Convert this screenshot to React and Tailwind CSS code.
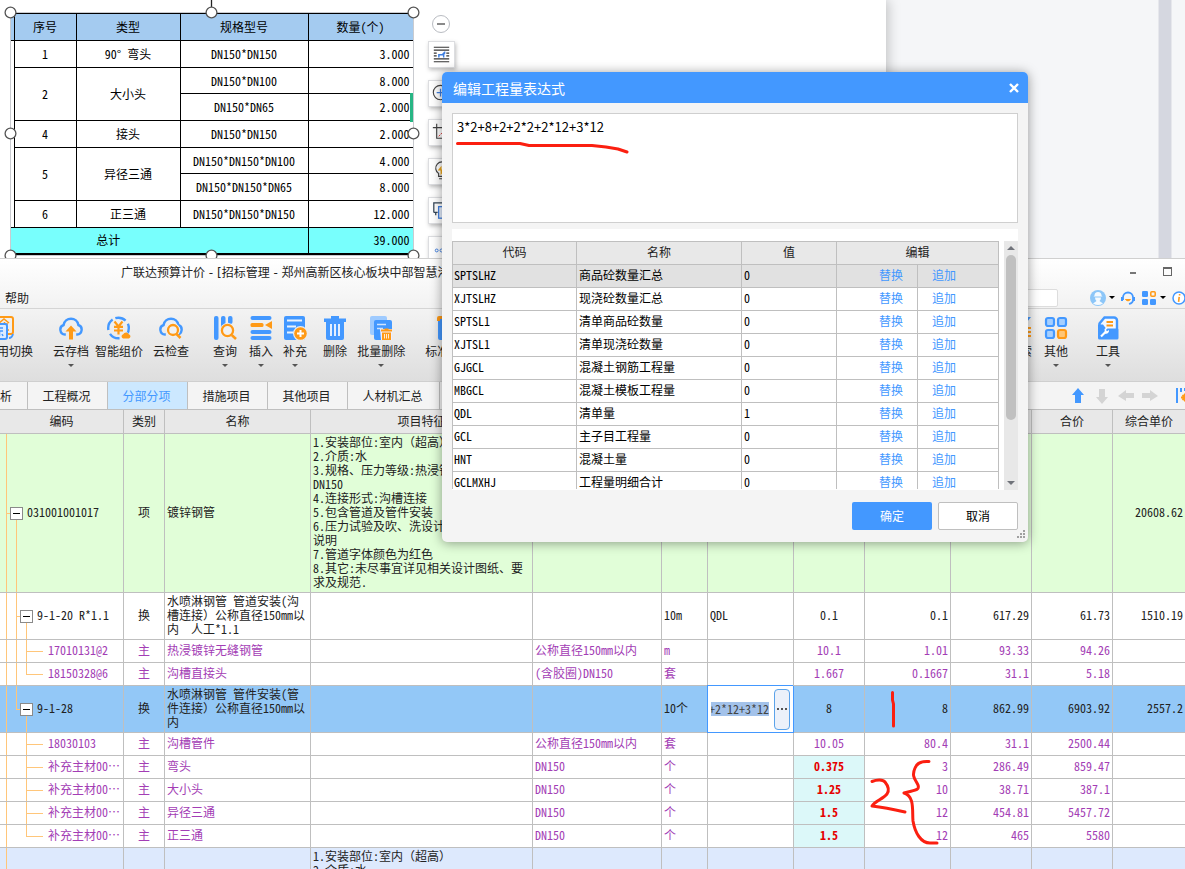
import React from "react";

const BLUE = "#4398ff";
const ORANGE = "#ff9a16";

/* ---------- Document area ---------- */

const cell = "border border-black py-0";

function QuantityTable() {
  return (
    <table className="w-[402px] table-fixed border-collapse border-b-2 border-black text-center font-[family-name:'Noto_Sans_Mono_CJK_SC','Noto_Sans_CJK_SC',monospace] text-xs leading-4 text-black">
      <colgroup>
        <col className="w-[3px]" />
        <col className="w-[62px]" />
        <col className="w-[104px]" />
        <col className="w-[128px]" />
        <col className="w-[105px]" />
      </colgroup>
      <thead className="bg-[#a4cbf0]">
        <tr className="h-[27px]">
          <td className="border-y border-black p-0" />
          <th className={`${cell} font-normal`}>序号</th>
          <th className={`${cell} font-normal`}>类型</th>
          <th className={`${cell} font-normal`}>规格型号</th>
          <th className={`${cell} font-normal`}>数量(个)</th>
        </tr>
      </thead>
      <tbody className="bg-white">
        <tr className="h-[27px]">
          <td rowSpan={7} className="p-0" />
          <td className={cell}>1</td>
          <td className={cell}>90° 弯头</td>
          <td className={cell}>DN150*DN150</td>
          <td className={`${cell} pr-[3px] text-right`}>3.000</td>
        </tr>
        <tr className="h-[26px]">
          <td rowSpan={2} className={cell}>2</td>
          <td rowSpan={2} className={cell}>大小头</td>
          <td className={cell}>DN150*DN100</td>
          <td className={`${cell} pr-[3px] text-right`}>8.000</td>
        </tr>
        <tr className="h-[27px]">
          <td className={cell}>DN150*DN65</td>
          <td className={`${cell} pr-[3px] text-right`}>2.000</td>
        </tr>
        <tr className="h-[27px]">
          <td className={cell}>4</td>
          <td className={cell}>接头</td>
          <td className={cell}>DN150*DN150</td>
          <td className={`${cell} pr-[3px] text-right`}>2.000</td>
        </tr>
        <tr className="h-[26px]">
          <td rowSpan={2} className={cell}>5</td>
          <td rowSpan={2} className={cell}>异径三通</td>
          <td className={cell}>DN150*DN150*DN100</td>
          <td className={`${cell} pr-[3px] text-right`}>4.000</td>
        </tr>
        <tr className="h-[27px]">
          <td className={cell}>DN150*DN150*DN65</td>
          <td className={`${cell} pr-[3px] text-right`}>8.000</td>
        </tr>
        <tr className="h-[27px]">
          <td className={cell}>6</td>
          <td className={cell}>正三通</td>
          <td className={cell}>DN150*DN150*DN150</td>
          <td className={`${cell} pr-[3px] text-right`}>12.000</td>
        </tr>
        <tr className="h-[26px] bg-[#78fffd]">
          <td colSpan={4} className="border-y border-black py-0 pr-[102px]">总计</td>
          <td className={`${cell} pr-[3px] text-right`}>39.000</td>
        </tr>
      </tbody>
    </table>
  );
}

function SelectionFrame() {
  const points = [[10, 12], [211, 12], [413, 12], [10, 133], [413, 133], [10, 255], [211, 255], [413, 255]];
  return (
    <svg className="pointer-events-none absolute left-0 top-0" width="424" height="258" aria-hidden="true">
      <path d="M10.5 12.5H413.5V255.5H10.5Z" fill="none" stroke="#c9cbd0" />
      <path d="M211.5 0V7" stroke="#222" strokeWidth="1.3" />
      <rect x="410" y="93" width="3" height="29" fill="#27b584" />
      {points.map(([x, y]) => (
        <circle key={`${x}-${y}`} cx={x + 0.5} cy={y + 0.5} r="5.4" fill="#fff" stroke="#555" strokeWidth="1.3" />
      ))}
    </svg>
  );
}

const sideIcons = [
  { label: "布局选项", art: <><path d="M5 5.500h16M5 8.500h16M5 17.500h16M5 20.500h16M5 11.500h3M5 14.500h3M18 11.500h3M18 14.500h3" stroke="#333" strokeWidth="1.200" /><path d="M9.500 16v-3.500h4l2.500-2.500h1v2l-1 1v3h-1.500v-2H11V16z" fill="#3f7fe0" /></> },
  { label: "放大", art: <><circle cx="12" cy="12" r="7.500" fill="none" stroke="#444" strokeWidth="1.200" /><path d="M8 12h8M12 8v8" stroke="#3f7fe0" strokeWidth="1.300" /></> },
  { label: "裁剪", art: <><path d="M4 8h16v14M8 4v15h16" fill="none" stroke="#444" strokeWidth="1.200" /><path d="M10 17l8-8" stroke="#d33" strokeDasharray="2 1" /></> },
  { label: "智能", art: <><path d="M10 18v-3a6.500 6.500 0 1 1 7 0v3zM10.500 20.500h6" fill="none" stroke="#444" strokeWidth="1.200" /><path d="M13 7l-4 5h3v5l5-6h-4z" fill="#f0a91c" /></> },
  { label: "转换", art: <><path d="M5 15V5h16M5 15h4M7 15v3" fill="none" stroke="#345" strokeWidth="1.300" /><rect x="10" y="9" width="12" height="12" fill="#e8f1ff" stroke="#3f7fe0" strokeWidth="1.300" /><path d="M14 12v6h4" fill="none" stroke="#3f7fe0" /></> },
  { label: "更多", art: <><circle cx="8" cy="14" r="1.500" fill="none" stroke="#3f7fe0" /><circle cx="13" cy="14" r="1.500" fill="none" stroke="#3f7fe0" /></> },
];

function DocumentArea() {
  return (
    <section className="flex h-[258px] shrink-0 overflow-hidden bg-[#f5f6f8]">
      <div className="relative z-10 flex w-[886px] shrink-0 bg-white shadow-[2px_0_12px_rgba(0,0,0,0.22)]">
        <div className="w-[424px] pl-[11px] pt-[13px]">
          <QuantityTable />
        </div>
        <SelectionFrame />
        <div className="flex w-[34px] flex-col items-center gap-3 pt-[15px]">
          <button aria-label="收起" className="-mb-1 flex size-[18px] shrink-0 items-center justify-center rounded-full border border-[#b9bcc2] bg-white">
            <span className="h-0.5 w-2 bg-[#8a8a8a]" />
          </button>
          {sideIcons.map((icon) => (
            <button key={icon.label} aria-label={icon.label} className="size-[27px] shrink-0 border border-[#dcdde0] bg-white shadow-[1px_2px_4px_rgba(0,0,0,0.25)]">
              <svg width="25" height="25" viewBox="0 0 26 26">{icon.art}</svg>
            </button>
          ))}
        </div>
      </div>
      <div className="flex-1" />
      <div className="w-3.5 border-x border-[#e6e7ec] bg-[#d5d7e0]" />
      <div className="w-[13px] bg-[#f5f6f8]" />
    </section>
  );
}

/* ---------- Toolbar icons ---------- */

const Cloud = () => (
  <path d="M6.800 18.500H6A4.900 4.900 0 0 1 4.600 9 7.500 7.500 0 0 1 19.400 9 4.900 4.900 0 0 1 18 18.500h-.8" fill="none" stroke={BLUE} strokeWidth="2.400" />
);

const art = {
  swap: <><rect x="2" y="1" width="20" height="17" rx="2" fill="none" stroke={ORANGE} strokeWidth="2" /><path d="M8 7l5-4 5 4M10 8h7M13.500 6v8M9 14h9" fill="none" stroke={ORANGE} strokeWidth="1.600" /><rect x="1" y="8" width="15" height="15" rx="2" fill="#dcecff" stroke={BLUE} strokeWidth="2" /><path d="M4 12h8M5 15h7M8.500 15v5M5 20l1-2M12 20l-1-2" stroke={BLUE} strokeWidth="1.500" /><path d="M18 22q3 0 4-4" fill="none" stroke={BLUE} strokeWidth="1.800" /></>,
  cloudUp: <><Cloud /><path d="M12 9.500l5.500 6H14v8h-4v-8H6.500z" fill={ORANGE} /></>,
  price: <><circle cx="11.500" cy="12" r="10.300" fill="none" stroke={BLUE} strokeWidth="2.400" strokeDasharray="12 3 11 4" /><path d="M7.500 5.500l4 5 4-5M7 10.800h9M7 14.500h9M11.500 10v8.500" fill="none" stroke={ORANGE} strokeWidth="2.200" /><path d="M14 23.500h9.500l-3.200-6h-3z" fill="#efefef" stroke="#efefef" strokeWidth="2" /><path d="M16 22.500a2.200 2.200 0 0 1 .2-4.200 3 3 0 0 1 5.600 0 2.200 2.200 0 0 1 .2 4.200z" fill={ORANGE} /></>,
  cloudSearch: <><Cloud /><circle cx="14" cy="14" r="7" fill="#f1f1f1" /><circle cx="14" cy="14" r="5" fill="#f1f1f1" stroke={ORANGE} strokeWidth="2.300" /><path d="M17.500 18l4 4" stroke={ORANGE} strokeWidth="2.500" /></>,
  query: <><rect x="1" y="0" width="4.500" height="24" rx="2" fill={BLUE} /><rect x="8" y="0" width="4.500" height="13" rx="2" fill={BLUE} /><rect x="15" y="0" width="4.500" height="8" rx="2" fill={BLUE} /><circle cx="14.500" cy="14.500" r="7.500" fill="#f1f1f1" /><circle cx="14.500" cy="14.500" r="5.600" fill="#f1f1f1" stroke={ORANGE} strokeWidth="2.300" /><path d="M18.700 19l4.300 4" stroke={ORANGE} strokeWidth="2.500" /></>,
  insert: <><g fill={BLUE}><rect x="1.500" y="0" width="21" height="4" rx="2" /><rect x="1.500" y="14" width="21" height="4" rx="2" /><rect x="1.500" y="20" width="21" height="4" rx="2" /></g><rect x="1.500" y="7" width="13" height="4" rx="1.500" fill={ORANGE} /><path d="M23 5v8l-7-4z" fill={ORANGE} /></>,
  supplement: <><path d="M3 0h17a2 2 0 0 1 2 2v22H3a2 2 0 0 1-2-2V2a2 2 0 0 1 2-2z" fill={BLUE} /><path d="M4 4.500h15M4 10.500h9M4 16.500h6" stroke="#e9f3ff" strokeWidth="1.800" /><circle cx="17.500" cy="17.500" r="7.500" fill="#eee" /><circle cx="17.500" cy="17.500" r="6.300" fill={ORANGE} /><path d="M14 17.500h7M17.500 14v7" stroke="#fff" strokeWidth="2" /></>,
  trash: <><path d="M1 2.500h7V0h8v2.500h7V6H1z" fill={BLUE} /><path d="M3 5h18v17a2 2 0 0 1-2 2H5a2 2 0 0 1-2-2z" fill={BLUE} /><path d="M8 8v12M12 8v12M16 8v12" stroke="#e9f3ff" strokeWidth="1.900" /></>,
  batch: <><rect x="1" y="0" width="17" height="19" rx="2" fill="#9fcbff" /><rect x="5" y="4" width="18" height="20" rx="2" fill={BLUE} /><path d="M8 8.500h9M8 12.500h6" stroke="#cfe4ff" strokeWidth="1.700" /><path d="M11 13h12v11H12z" fill="#eef" /><path d="M12 14.500h11M15.500 13.500h4" stroke={ORANGE} strokeWidth="1.800" /><path d="M13 16.500h9V24h-9z" fill={ORANGE} /><path d="M15.500 18v4.500M17.500 18v4.500M19.500 18v4.500" stroke="#fff" strokeWidth=".8" /></>,
  standard: <><rect x="1" y="1" width="20" height="23" rx="2" fill={BLUE} /><path d="M0 5V2a2 2 0 0 1 2-2h8v3H3v2z" fill={ORANGE} /><path d="M5 8h14M5 13h14M5 18h14" stroke="#fff" strokeWidth="1.600" /></>,
  filter: <><path d="M1 1h22l-8 10v12l-5-3v-9z" fill={BLUE} /><path d="M14 12h9M14 16h9M14 20h9" stroke={ORANGE} strokeWidth="2" /></>,
  other: <><g fill="#a5cfff" stroke={BLUE} strokeWidth="2.200"><rect x="2" y="2" width="8" height="8" rx="2" /><rect x="14" y="2" width="8" height="8" rx="2" /><rect x="2" y="14" width="8" height="8" rx="2" /></g><rect x="14" y="14" width="8" height="8" rx="2" fill="#ffc676" stroke={ORANGE} strokeWidth="2.200" /></>,
  tools: <><path d="M3.500 12V7.500l5-6H18a3 3 0 0 1 3 3V14" fill="#f4f8ff" stroke={BLUE} strokeWidth="2.400" /><path d="M10.500 6h6.500M10.500 9.500h6.500" stroke={ORANGE} strokeWidth="2" /><path d="M2 8.500h5l3 4h11a1.500 1.500 0 0 1 1.500 1.500v8a1.500 1.500 0 0 1-1.500 1.500H3.500A1.500 1.500 0 0 1 2 22z" fill={BLUE} /><path d="M5 20.500l5-5" stroke="#fff" strokeWidth="2.200" /><path d="M8.500 13a3 3 0 0 1 3-1l-1.500 2 1 1.200 2-1.200a3 3 0 0 1-4 3.500z" fill="#fff" /></>,
};

function ToolButton({ icon, label, caret, className = "" }) {
  return (
    <button className={`flex shrink-0 flex-col items-center ${className}`}>
      <svg width="24" height="24" viewBox="0 0 24 24">{art[icon]}</svg>
      <span className="mt-0.5 whitespace-nowrap text-xs leading-[18px]">{label}</span>
      {caret && <span className="mt-1 border-x-[3px] border-t-[3px] border-x-transparent border-t-[#555]" />}
    </button>
  );
}

function TitleBar() {
  return (
    <header className="flex h-[50px] shrink-0 flex-col border-b border-[#d5d5d5] bg-linear-to-b from-white to-[#f2f2f2]">
      <div className="flex h-7 items-center pl-[121px] pr-3">
        <h1 className="flex-1 whitespace-nowrap font-[family-name:'DejaVu_Sans','Noto_Sans_CJK_SC',sans-serif] text-xs">广联达预算计价 - [招标管理 - 郑州高新区核心板块中部智慧港]</h1>
        <button aria-label="最小化" className="mr-[27px] h-0.5 w-1.5 bg-[#777]" />
        <button aria-label="还原" className="mr-px -mt-1 size-[9px] border border-t-2 border-[#666]" />
      </div>
      <div className="flex flex-1 items-center pl-[5px]">
        <a href="#help" className="text-xs">帮助</a>
        <input aria-label="搜索" className="ml-auto h-[18px] w-[180px] rounded-xs border border-[#ddd] bg-white" />
        <div className="ml-8 flex w-[95px] shrink-0 items-center">
          <button aria-label="用户">
            <svg width="16" height="16" viewBox="0 0 16 16"><circle cx="8" cy="8" r="8" fill="#8cc6f8" /><path d="M4.500 5.500a3.500 3.500 0 0 1 7 0l1 1h-9zM5 7.500h6q0 2-1.500 3.500l3.500 2.500q-5 3-10 0L6.500 11Q5 9.500 5 7.500z" fill="#fff" opacity=".9" /></svg>
          </button>
          <span className="ml-[3px] border-x-[3px] border-t-[3px] border-x-transparent border-t-black" />
          <button aria-label="客服" className="ml-1.5">
            <svg width="14" height="14" viewBox="0 0 14 14"><path d="M2 9V6.500a5 5 0 0 1 10 0V9q0 3-4 4" fill="none" stroke={BLUE} strokeWidth="1.800" /><path d="M1 6v4M13 6v4" stroke={BLUE} strokeWidth="2" /><path d="M4.500 8.500q2.500 3 5 0z" fill={ORANGE} stroke={ORANGE} /></svg>
          </button>
          <button aria-label="应用" className="ml-[7px]">
            <svg width="14" height="14" viewBox="0 0 14 14"><g fill={BLUE}><rect width="6" height="6" rx="1.300" /><rect y="8" width="6" height="6" rx="1.300" /><rect x="8" y="8" width="6" height="6" rx="1.300" /></g><rect x="8.800" y=".8" width="4.400" height="4.400" rx="1" fill="none" stroke={ORANGE} strokeWidth="1.500" /></svg>
          </button>
          <span className="ml-1 border-x-[3px] border-t-[3px] border-x-transparent border-t-black" />
          <button aria-label="关于" className="ml-1.5 shrink-0">
            <svg width="14" height="14" viewBox="0 0 14 14"><circle cx="7" cy="7" r="6" fill="#fff" stroke={BLUE} strokeWidth="1.500" /><path d="M7.600 3v1.600M7.200 5.800l-.6 5" stroke={ORANGE} strokeWidth="1.600" /></svg>
          </button>
        </div>
      </div>
    </header>
  );
}

function Toolbar() {
  return (
    <div className="flex h-[73px] shrink-0 items-start overflow-hidden border-b border-[#cfcfcf] bg-linear-to-b from-[#f3f3f3] to-[#dedede] pt-[7px]">
      <ToolButton icon="swap" label="全费用切换" className="-ml-[27px]" />
      <ToolButton icon="cloudUp" label="云存档" caret className="ml-5" />
      <ToolButton icon="price" label="智能组价" className="ml-1.5" />
      <ToolButton icon="cloudSearch" label="云检查" className="ml-2.5" />
      <ToolButton icon="query" label="查询" caret className="ml-6" />
      <ToolButton icon="insert" label="插入" caret className="ml-3" />
      <ToolButton icon="supplement" label="补充" caret className="ml-2.5" />
      <ToolButton icon="trash" label="删除" className="ml-4" />
      <ToolButton icon="batch" label="批量删除" caret className="ml-2.5" />
      <ToolButton icon="standard" label="标准组价" className="ml-5" />
      <div className="ml-auto flex gap-3 pr-[65px]">
        <ToolButton icon="filter" label="检索" />
        <ToolButton icon="other" label="其他" caret />
        <ToolButton icon="tools" label="工具" caret className="ml-4" />
      </div>
    </div>
  );
}

const tabBase = "shrink-0 whitespace-nowrap border-r border-[#bfbfbf] pr-0.5 text-xs";

const Arrow = ({ d, fill, label }) => (
  <button aria-label={label} className="shrink-0">
    <svg width="16" height="16" viewBox="0 0 16 16"><path d={d} fill={fill} /></svg>
  </button>
);

function TabBar() {
  return (
    <nav className="flex h-[27px] shrink-0 overflow-hidden bg-[#f4f4f4]">
      <button className="w-7 shrink-0 border-r border-[#bfbfbf] pr-4 text-right text-xs">析</button>
      <button className={`${tabBase} w-20`}>工程概况</button>
      <button className={`${tabBase} w-20 bg-[#cce8ff] text-[#4398ff]`}>分部分项</button>
      <button className={`${tabBase} w-20`}>措施项目</button>
      <button className={`${tabBase} w-20`}>其他项目</button>
      <button className={`${tabBase} w-[92px]`}>人材机汇总</button>
      <div className="ml-auto flex w-[115px] items-center gap-2">
        <Arrow label="上移" fill={BLUE} d="M8 0l6 7h-3v8H5V7H2z" />
        <Arrow label="下移" fill="#d4d4d4" d="M8 16l6-7h-3V1H5v8H2z" />
        <Arrow label="左移" fill="#d4d4d4" d="M0 8l8-6v3h8v5H8v3z" />
        <Arrow label="右移" fill="#d4d4d4" d="M16 8L8 2v3H0v5h8v3z" />
        <button aria-label="设置" className="ml-2 shrink-0">
          <svg width="16" height="16" viewBox="0 0 16 16"><path d="M3 0v15M7 0v4M11 0v3" stroke={BLUE} strokeWidth="2" /><path d="M7 9.500h8M11 5.500v8M8.500 7l5 5M13.500 7l-5 5" stroke={ORANGE} strokeWidth="2" /></svg>
        </button>
      </div>
    </nav>
  );
}

/* ---------- Bill of quantities grid ---------- */

const feature = `1.安装部位:室内（超高）
2.介质:水
3.规格、压力等级:热浸镀锌钢管
DN150
4.连接形式:沟槽连接
5.包含管道及管件安装
6.压力试验及吹、洗设计要求详见
说明
7.管道字体颜色为红色
8.其它:未尽事宜详见相关设计图纸、要
求及规范.`;

const rows = [
  { kind: "item", tone: "green", code: "031001001017", type: "项", name: "镀锌钢管", feature, total: "20608.62" },
  { kind: "sub", code: "9-1-20 R*1.1", type: "换", name: "水喷淋钢管 管道安装(沟\n槽连接）公称直径150mm以\n内  人工*1.1", unit: "10m", expr: "QDL", rate: "0.1", qty: "0.1", price: "617.29", sum: "61.73", total: "1510.19" },
  { kind: "leaf", code: "17010131@2", name: "热浸镀锌无缝钢管", spec: "公称直径150mm以内", unit: "m", rate: "10.1", qty: "1.01", price: "93.33", sum: "94.26" },
  { kind: "leaf", last: true, code: "18150328@6", name: "沟槽直接头", spec: "(含胶圈)DN150", unit: "套", rate: "1.667", qty: "0.1667", price: "31.1", sum: "5.18" },
  { kind: "sub", tone: "selected", last: true, code: "9-1-28", type: "换", name: "水喷淋钢管 管件安装(管\n件连接）公称直径150mm以\n内", unit: "10个", editing: true, rate: "8", qty: "8", price: "862.99", sum: "6903.92", total: "2557.2" },
  { kind: "leaf", under: true, code: "18030103", name: "沟槽管件", spec: "公称直径150mm以内", unit: "套", rate: "10.05", qty: "80.4", price: "31.1", sum: "2500.44" },
  { kind: "leaf", under: true, code: "补充主材00…", name: "弯头", spec: "DN150", unit: "个", rate: "0.375", hot: true, qty: "3", price: "286.49", sum: "859.47" },
  { kind: "leaf", under: true, code: "补充主材00…", name: "大小头", spec: "DN150", unit: "个", rate: "1.25", hot: true, qty: "10", price: "38.71", sum: "387.1" },
  { kind: "leaf", under: true, code: "补充主材00…", name: "异径三通", spec: "DN150", unit: "个", rate: "1.5", hot: true, qty: "12", price: "454.81", sum: "5457.72" },
  { kind: "leaf", under: true, last: true, code: "补充主材00…", name: "正三通", spec: "DN150", unit: "个", rate: "1.5", hot: true, qty: "12", price: "465", sum: "5580" },
];

const rowHeight = { item: "h-[159px]", sub: "h-[47px]", leaf: "h-[23px]" };
const codeIndent = { item: "pl-[27px]", sub: "pl-[37px]", leaf: "pl-12" };
const toneClass = { green: "bg-[#e1fed8]", selected: "bg-[#93c8f7]" };

function TreeGuides({ kind, last, under }) {
  const line = { stroke: "#ffc67a", strokeWidth: 1 };
  return (
    <svg className="absolute inset-0 h-full w-full" aria-hidden="true" shapeRendering="crispEdges">
      <line x1="6.5" x2="6.5" y1="0" y2="100%" {...line} />
      {kind === "item" && <><line x1="6" x2="16" y1="50%" y2="50%" {...line} /><line x1="16.5" x2="16.5" y1="50%" y2="100%" {...line} /></>}
      {kind === "sub" && <><line x1="16.5" x2="16.5" y1="0" y2={last ? "50%" : "100%"} {...line} /><line x1="16" x2="26" y1="50%" y2="50%" {...line} /><line x1="26.5" x2="26.5" y1="50%" y2="100%" {...line} /></>}
      {kind === "leaf" && <>{!under && <line x1="16.5" x2="16.5" y1="0" y2="100%" {...line} />}<line x1="26.5" x2="26.5" y1="0" y2={last ? "50%" : "100%"} {...line} /><line x1="26" x2="43" y1="50%" y2="50%" {...line} /></>}
    </svg>
  );
}

function ExpressionEditor() {
  return (
    <div className="-mb-px -ml-px -mt-px flex h-12 items-center border-y border-l border-[#4398ff] bg-white">
      <div className="ml-[3px] flex w-[58px] justify-end overflow-hidden bg-[#a3c2ea]">
        <input aria-label="工程量表达式" readOnly value="3*2+8+2+2*2+2*12+3*12" className="w-[128px] shrink-0 text-right leading-[14px] text-[#444] outline-none" />
      </div>
      <button aria-label="编辑表达式" className="ml-auto mr-[3px] flex h-[41px] w-4 items-center justify-center gap-0.5 rounded-sm border border-[#5ba3ea] bg-[#ecf1fa]">
        <i className="size-0.5 bg-[#555]" /><i className="size-0.5 bg-[#555]" /><i className="size-0.5 bg-[#555]" />
      </button>
    </div>
  );
}

const td = "border-b border-r border-[#bfbfbf] px-0.5 pt-0 pb-[2px] whitespace-pre";

function BillGrid() {
  const heads = ["编码", "类别", "名称", "项目特征", "规格及型号", "单位", "工程量表达式", "含量", "工程量", "单价", "合价", "综合单价"];
  return (
    <table className="w-full table-fixed border-separate border-spacing-0 border-t border-[#bfbfbf] font-[family-name:'Noto_Sans_Mono_CJK_SC','Noto_Sans_CJK_SC',monospace] text-xs leading-[14px]">
      <colgroup>
        <col className="w-[124px]" /><col className="w-[41px]" /><col className="w-[146px]" /><col className="w-[222px]" />
        <col className="w-[129px]" /><col className="w-[46px]" /><col className="w-[86px]" /><col className="w-[71px]" />
        <col className="w-[86px]" /><col className="w-[81px]" /><col className="w-[81px]" /><col />
      </colgroup>
      <thead>
        <tr className="h-6 bg-[#e8e8e8]">
          {heads.map((h) => (
            <th key={h} className="whitespace-nowrap border-b border-r border-[#bfbfbf] p-0 pb-[2px] font-normal last:border-r-0">{h}</th>
          ))}
        </tr>
      </thead>
      <tbody>
        {rows.map((r, i) => (
          <tr key={i} className={`${rowHeight[r.kind]} ${toneClass[r.tone] || "bg-white"} ${r.kind === "leaf" ? "text-[#a33db5]" : "text-[#222]"}`}>
            <td className={`relative ${td} ${codeIndent[r.kind]}`}>
              <TreeGuides {...r} />
              {r.kind !== "leaf" && (
                <button aria-label="折叠" className={`absolute top-1/2 -mt-1.5 flex size-[13px] items-center justify-center border border-[#8a8a8a] bg-white ${r.kind === "item" ? "left-2.5" : "left-5"}`}>
                  <span className="h-px w-[7px] bg-black" />
                </button>
              )}
              {r.code}
            </td>
            <td className={`${td} text-center`}>{r.type || "主"}</td>
            <td className={td}>{r.name}</td>
            <td className={td}>{r.feature}</td>
            <td className={td}>{r.spec}</td>
            <td className={td}>{r.unit}</td>
            {r.editing ? <td className="border-b border-r border-[#4398ff] p-0"><ExpressionEditor /></td> : <td className={td}>{r.expr}</td>}
            <td className={`${td} text-center ${r.hot ? "bg-[#dcf8f9] font-bold text-[#e60000]" : ""}`}>{r.rate}</td>
            <td className={`${td} text-right`}>{r.qty}</td>
            <td className={`${td} text-right`}>{r.price}</td>
            <td className={`${td} text-right`}>{r.sum}</td>
            <td className="border-b border-[#bfbfbf] px-0.5 pb-[2px] pt-0 text-right">{r.total}</td>
          </tr>
        ))}
        <tr className="h-[159px] bg-[#dde9fd] text-[#222]">
          <td className={`relative ${td}`}>
            <TreeGuides />
          </td>
          <td className={td} /><td className={td} />
          <td className={td}>{feature}</td>
          <td className={td} /><td className={td} /><td className={td} /><td className={td} />
          <td className={td} /><td className={td} /><td className={td} /><td />
        </tr>
      </tbody>
    </table>
  );
}

/* ---------- Expression dialog ---------- */

const codes = [
  ["SPTSLHZ", "商品砼数量汇总", "0"],
  ["XJTSLHZ", "现浇砼数量汇总", "0"],
  ["SPTSL1", "清单商品砼数量", "0"],
  ["XJTSL1", "清单现浇砼数量", "0"],
  ["GJGCL", "混凝土钢筋工程量", "0"],
  ["MBGCL", "混凝土模板工程量", "0"],
  ["QDL", "清单量", "1"],
  ["GCL", "主子目工程量", "0"],
  ["HNT", "混凝土量", "0"],
  ["GCLMXHJ", "工程量明细合计", "0"],
];

const dc = "border-b border-r border-[#bfbfbf] pt-0 pb-[2px]";

function ExpressionDialog() {
  return (
    <section role="dialog" aria-labelledby="dlg-title" className="absolute left-[442px] top-[72px] z-20 w-[586px] rounded-[5px] bg-[#f4f4f4] shadow-[0_1px_12px_rgba(0,0,0,0.4)]">
      <header className="flex h-[31px] items-center justify-between rounded-t-[5px] bg-[#4398ff] pl-[11px] pr-[9px] text-white">
        <h2 id="dlg-title" className="text-sm">编辑工程量表达式</h2>
        <button aria-label="关闭">
          <svg width="10" height="10" viewBox="0 0 10 10"><path d="M1 1l8 8M9 1l-8 8" stroke="#fff" strokeWidth="2.400" /></svg>
        </button>
      </header>
      <div className="px-2.5 pt-2.5">
        <textarea aria-label="表达式" defaultValue="3*2+8+2+2*2+2*12+3*12" className="block h-[110px] w-full resize-none border border-[#cfcfcf] bg-white px-1 py-1 text-[13px] leading-[18px] text-black outline-none" />
        <div className="mt-1.5 flex h-[261px] justify-between bg-white pt-3">
          <div className="h-[248px] w-[547px] overflow-hidden">
            <table className="w-full table-fixed border-separate border-spacing-0 border-l border-t border-[#bfbfbf] font-[family-name:'Noto_Sans_Mono_CJK_SC','Noto_Sans_CJK_SC',monospace] text-xs leading-[14px] text-black">
              <colgroup>
                <col className="w-[124px]" /><col className="w-[165px]" /><col className="w-[95px]" /><col className="w-[81px]" /><col className="w-[81px]" />
              </colgroup>
              <thead>
                <tr className="h-[23px] bg-[#e8e8e8] text-[#222]">
                  <th className={`${dc} font-normal`}>代码</th>
                  <th className={`${dc} font-normal`}>名称</th>
                  <th className={`${dc} font-normal`}>值</th>
                  <th colSpan={2} className={`${dc} font-normal`}>编辑</th>
                </tr>
              </thead>
              <tbody>
                {codes.map(([code, name, value], i) => (
                  <tr key={code} className={`h-[23px] ${i === 0 ? "bg-[#e1e1e1]" : "bg-white"}`}>
                    <td className={`${dc} px-px`}>{code}</td>
                    <td className={`${dc} px-0.5`}>{name}</td>
                    <td className={`${dc} px-0.5`}>{value}</td>
                    <td className={`${dc} pl-0 pr-3.5 text-right`}><button className="text-[#4398ff]">替换</button></td>
                    <td className={`${dc} pl-3.5 pr-0`}><button className="text-[#4398ff]">追加</button></td>
                  </tr>
                ))}
              </tbody>
            </table>
          </div>
          <div className="flex w-3.5 flex-col items-center bg-[#e8e8e8] py-[5px]">
            <span className="border-x-4 border-b-4 border-x-transparent border-b-[#70737a]" />
            <span className="mt-[5px] h-[165px] w-2.5 rounded-full bg-[#c0c0c0]" />
            <span className="mt-auto border-x-4 border-t-4 border-x-transparent border-t-[#70737a]" />
          </div>
        </div>
      </div>
      <footer className="flex justify-end gap-1.5 px-2.5 pb-3 pt-3 text-xs">
        <button className="h-7 w-20 rounded-xs bg-[#4398ff] text-white">确定</button>
        <button className="h-7 w-20 rounded-xs border border-[#bfbfbf] bg-white text-black">取消</button>
      </footer>
      <svg className="absolute bottom-1 right-[3px]" width="8" height="8" aria-hidden="true">
        <path d="M6 0h2v2H6zM3 3h2v2H3zM6 3h2v2H6zM0 6h2v2H0zM3 6h2v2H3zM6 6h2v2H6z" fill="#a0a0a0" />
      </svg>
    </section>
  );
}

function InkMarks() {
  return (
    <svg className="pointer-events-none absolute left-0 top-0 z-30" width="1185" height="869" fill="none" stroke="#fb1f10" strokeWidth="3" strokeLinecap="round" strokeLinejoin="round" aria-hidden="true">
      <path d="M457.500 143.500H520L529 145.500H592L606 147L618 149L627 152" />
      <path d="M892.500 692.500V700L893.500 704V726" />
      <path d="M872 781.500C877 779.500 883 779.500 885 782C889 787 889 791 887 794C883 799 875 801 872 806C881 807 892 809 905 812" />
      <path d="M929 761.500C922 761 917 762 915 768C911 777 916 780 918 785C920 791 914 790 904 793C915 796 912 812 913 821C915 833 921 843 930 843H937" />
    </svg>
  );
}

export default function App() {
  return (
    <div className="relative flex h-screen flex-col overflow-hidden bg-white font-[family-name:'Noto_Sans_CJK_SC',sans-serif] text-[#222]">
      <DocumentArea />
      <main className="flex min-h-0 flex-1 flex-col overflow-hidden border-t border-[#d0d0d0]">
        <TitleBar />
        <Toolbar />
        <TabBar />
        <div className="min-h-0 flex-1 overflow-hidden">
          <BillGrid />
        </div>
      </main>
      <ExpressionDialog />
      <InkMarks />
    </div>
  );
}
